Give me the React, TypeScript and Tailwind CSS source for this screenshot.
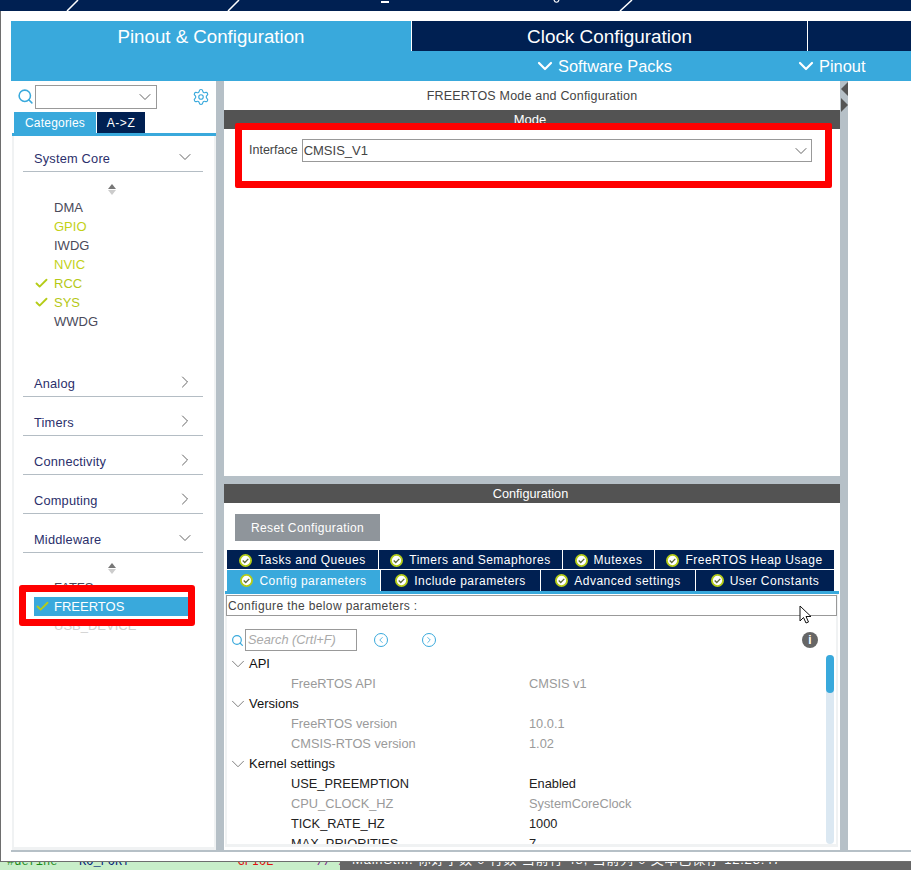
import { Search, Settings, ChevronDown, ChevronRight, Check, ChevronLeft } from "lucide-react";

const font = "font-['Liberation_Sans',Arial,sans-serif]";

const Category = ({ name, open }: { name: string; open?: boolean }) => (
    <div className="flex flex-row items-center justify-between h-[24px] ml-[9px] mr-[11px] border-b border-[#b4bdc4] pl-[11px] pr-[8px] text-[#2b2f6b] text-[12.8px] tracking-[0.2px]">
        <span className="-mt-[2px]">{name}</span>
        {open ? <ChevronDown size={20} strokeWidth={1.1} className="text-[#555] -mt-[6px]" /> : <ChevronRight size={20} strokeWidth={1.1} className="text-[#555] -mt-[6px]" />}
    </div>
);

const Sorter = () => (
    <div className="flex flex-col items-center gap-[1px] h-[14px] w-[10px]">
        <div className="w-0 h-0 border-x-[4px] border-x-transparent border-b-[5px] border-b-[#777]"></div>
        <div className="w-0 h-0 border-x-[4px] border-x-transparent border-t-[5px] border-t-[#ccc]"></div>
    </div>
);

const Ip = ({ name, color, checked }: { name: string; color: string; checked?: boolean }) => (
    <div className={`flex flex-row items-center shrink-0 h-[19px] pl-[20px] text-[13px] ${color}`}>
        <div className="w-[20px]">{checked && <Check size={15} strokeWidth={3} className="text-[#b5cc18]" />}</div>
        {name}
    </div>
);

const TabCheck = () => (
    <svg width="13" height="13" viewBox="0 0 14 14" className="shrink-0">
        <circle cx="7" cy="7" r="6" fill="#ffffff" stroke="#b5cc18" strokeWidth="2" />
        <path d="M4 7l2.2 2.2L10 5.2" fill="none" stroke="#5f6b3a" strokeWidth="1.4" />
    </svg>
);

const Tab = ({ name, w, active, pad }: { name: string; w: string; active?: boolean; pad?: string }) => (
    <div className={`flex flex-row items-center justify-center gap-[6px] h-full text-white text-[12px] tracking-[0.5px] ${w} ${pad ?? ""} ${active ? "bg-[#39a9dc]" : "bg-[#002052]"}`}>
        <TabCheck />
        {name}
    </div>
);

const Group = ({ name }: { name: string }) => (
    <div className="flex flex-row items-center shrink-0 h-[20px] text-[13px] text-[#111]">
        <ChevronDown size={22} strokeWidth={0.9} className="text-[#666]" />
        {name}
    </div>
);

const Param = ({ name, value, on }: { name: string; value: string; on?: boolean }) => (
    <div className={`flex flex-row items-center shrink-0 h-[20px] pl-[64px] text-[12.8px] ${on ? "text-[#222]" : "text-[#9a9a9a]"}`}>
        <span className="w-[238px]">{name}</span>
        {value}
    </div>
);

const App = () => {
    return (
        <div className={`relative w-[911px] h-[870px] overflow-hidden bg-white ${font}`}>
            {/* window title strip, only the bottom of it is visible */}
            <div className="h-[11px] bg-[#002052]">
                <svg width="911" height="11" className="block">
                    <path d="M78 0L67 11M239 0L228 11M632 0L620 11" stroke="#fff" strokeWidth="1.5" />
                    <rect x="381" y="1" width="8" height="2" fill="#fff" />
                    <path d="M554 0c1 3 4 3 5 0" stroke="#fff" strokeWidth="1.2" fill="none" />
                </svg>
            </div>

            <div className="h-[851px] border-l border-b border-[#6e6e6e] pl-[10px] pt-[10px] flex flex-col">
                {/* header */}
                <div className="h-[60px] flex flex-row bg-[#39a9dc] text-white shrink-0">
                    <div className="w-[400px] h-[30px] flex items-center justify-center text-[18.7px] pt-[3px]">Pinout &amp; Configuration</div>
                    <div className="flex-1 flex flex-col">
                        <div className="h-[30px] flex flex-row bg-[#002052] border-l border-white">
                            <div className="w-[396px] flex items-center justify-center text-[18.9px] pt-[3px] border-r border-white">Clock Configuration</div>
                        </div>
                        <div className="h-[30px] flex flex-row items-center text-[16.4px]">
                            <div className="flex flex-row items-center gap-[1px] ml-[122px] w-[261px]">
                                <ChevronDown size={24} strokeWidth={2.2} />
                                Software Packs
                            </div>
                            <div className="flex flex-row items-center gap-[1px]">
                                <ChevronDown size={24} strokeWidth={2.2} />
                                Pinout
                            </div>
                        </div>
                    </div>
                </div>

                <div className="flex flex-row h-[769px]">
                    {/* categories */}
                    <div className="w-[205px] flex flex-col bg-white">
                        <div className="h-[31px] flex flex-row items-center pl-[6px] pr-[6px] relative">
                            <Search size={17} strokeWidth={2.2} className="text-[#39a9dc] mr-[1px]" />
                            <div className="w-[122px] h-[24px] border border-[#999] flex items-center justify-end pr-[1px]">
                                <ChevronDown size={20} strokeWidth={1.1} className="text-[#555]" />
                            </div>
                            <Settings size={18} strokeWidth={1.5} className="text-[#39a9dc] ml-auto" />
                        </div>
                        <div className="flex flex-row h-[21px] pl-[3px] text-[12px] text-white gap-[1px]">
                            <div className="w-[82px] flex items-center justify-center bg-[#39a9dc] tracking-[0.2px]">Categories</div>
                            <div className="w-[48px] flex items-center justify-center bg-[#002052] tracking-[0.6px]">A-&gt;Z</div>
                        </div>
                        <div className="h-[3px] ml-[1px] bg-[#39a9dc]"></div>
                        <div className="flex-1 border-x-[2px] border-b-[3px] border-[#f0f2f3] ml-[1px] pt-[12px] flex flex-col min-h-0">
                            <Category name="System Core" open />
                            <div className="flex justify-center pt-[12px] pr-[4px] h-[26px] shrink-0"><Sorter /></div>
                            <div className="flex flex-col">
                                <Ip name="DMA" color="text-[#4a4a5a]" />
                                <Ip name="GPIO" color="text-[#c3d117]" />
                                <Ip name="IWDG" color="text-[#4a4a5a]" />
                                <Ip name="NVIC" color="text-[#c3d117]" />
                                <Ip name="RCC" color="text-[#b5c816]" checked />
                                <Ip name="SYS" color="text-[#b5c816]" checked />
                                <Ip name="WWDG" color="text-[#4a4a5a]" />
                            </div>
                            <div className="h-[42px] shrink-0"></div>
                            <div className="flex flex-col gap-[15px]">
                                <Category name="Analog" />
                                <Category name="Timers" />
                                <Category name="Connectivity" />
                                <Category name="Computing" />
                                <Category name="Middleware" open />
                            </div>
                            <div className="flex justify-center pt-[10px] pr-[4px] h-[25px] shrink-0"><Sorter /></div>
                            <Ip name="FATFS" color="text-[#4a4a5a]" />
                            <div className="flex flex-row items-center shrink-0 h-[19px] ml-[20px] w-[155px] bg-[#39a9dc] text-white text-[13px]">
                                <div className="w-[20px] pl-[1px]"><Check size={15} strokeWidth={3} className="text-[#b5cc18]" /></div>
                                FREERTOS
                            </div>
                            <Ip name="USB_DEVICE" color="text-[#d0d0d0]" />
                        </div>
                    </div>
                    <div className="w-[8px] bg-[#b6c0c7]"></div>

                    {/* mode and configuration */}
                    <div className="w-[616px] flex flex-col">
                        <div className="h-[29px] flex items-center justify-center text-[12.5px] text-[#444] tracking-[0.2px] pt-[2px]">FREERTOS Mode and Configuration</div>
                        <div className="h-[19px] bg-[#535353] text-white text-[13px] flex items-center justify-center pr-[4px]">Mode</div>
                        <div className="h-[347px] pl-[25px] pt-[10px]">
                            <div className="flex flex-row items-center gap-[4px] text-[12.5px] text-[#444]">
                                Interface
                                <div className="w-[510px] h-[23px] border border-[#999] flex flex-row items-center justify-between pl-[1px] text-[13px]">
                                    CMSIS_V1
                                    <ChevronDown size={20} strokeWidth={1.1} className="text-[#555]" />
                                </div>
                            </div>
                        </div>
                        <div className="h-[8px] bg-[#b6c0c7]"></div>
                        <div className="h-[19px] bg-[#535353] text-white text-[12.7px] flex items-center justify-center pr-[3px] pt-[2px]">Configuration</div>
                        <div className="h-[344px] flex flex-col">
                            <div className="mt-[11px] ml-[11px] w-[145px] h-[27px] bg-[#8f959b] text-white text-[12px] tracking-[0.37px] flex items-center justify-center">Reset Configuration</div>
                            <div className="mt-[9px] ml-[3px] w-[607px] h-[19px] flex flex-row gap-[1px]">
                                <Tab name="Tasks and Queues" w="w-[151px]" pad="pt-[1px]" />
                                <Tab name="Timers and Semaphores" w="w-[183px]" pad="pt-[1px]" />
                                <Tab name="Mutexes" w="w-[91px]" pad="pt-[1px]" />
                                <Tab name="FreeRTOS Heap Usage" w="flex-1" pad="pt-[1px]" />
                            </div>
                            <div className="mt-[1px] ml-[3px] w-[607px] h-[21px] flex flex-row gap-[1px]">
                                <Tab name="Config parameters" w="w-[153px]" active />
                                <Tab name="Include parameters" w="w-[159px]" />
                                <Tab name="Advanced settings" w="w-[154px]" />
                                <Tab name="User Constants" w="flex-1" />
                            </div>
                            <div className="h-[3px] ml-[1px] w-[614px] bg-[#39a9dc]"></div>
                            <div className="flex-1 ml-[1px] w-[613px] border-x-[2px] border-b-[3px] border-[#f0f2f3] flex flex-col min-h-0">
                                <div className="mt-[1px] -ml-[1px] w-[611px] h-[21px] border border-[#999] text-[12px] text-[#444] tracking-[0.38px] flex items-center pl-[1px] shrink-0">Configure the below parameters :</div>
                                <div className="h-[48px] -mb-[10px] flex flex-row items-center pl-[4px] shrink-0">
                                    <Search size={13} strokeWidth={2.2} className="text-[#39a9dc] mr-[1px]" />
                                    <div className="w-[112px] h-[22px] border border-[#999] flex items-center pl-[2px] text-[12.8px] italic text-[#aaa]">Search (Crtl+F)</div>
                                    <div className="ml-[17px] w-[14px] h-[14px] rounded-full border border-[#39a9dc] flex items-center justify-center">
                                        <ChevronLeft size={10} strokeWidth={2} className="text-[#39a9dc]" />
                                    </div>
                                    <div className="ml-[34px] w-[14px] h-[14px] rounded-full border border-[#39a9dc] flex items-center justify-center">
                                        <ChevronRight size={10} strokeWidth={2} className="text-[#39a9dc]" />
                                    </div>
                                    <div className="ml-[366px] w-[16px] h-[16px] rounded-full bg-[#666] text-white text-[12px] font-bold flex items-center justify-center">i</div>
                                </div>
                                <div className="flex-1 flex flex-row min-h-0 overflow-hidden">
                                    <div className="w-[599px] flex flex-col overflow-hidden">
                                        <Group name="API" />
                                        <Param name="FreeRTOS API" value="CMSIS v1" />
                                        <Group name="Versions" />
                                        <Param name="FreeRTOS version" value="10.0.1" />
                                        <Param name="CMSIS-RTOS version" value="1.02" />
                                        <Group name="Kernel settings" />
                                        <Param name="USE_PREEMPTION" value="Enabled" on />
                                        <Param name="CPU_CLOCK_HZ" value="SystemCoreClock" />
                                        <Param name="TICK_RATE_HZ" value="1000" on />
                                        <Param name="MAX_PRIORITIES" value="7" on />
                                    </div>
                                    <div className="w-[8px] h-[189px] mt-[1px] rounded-[4px] bg-[#dbe8f2]">
                                        <div className="h-[38px] rounded-[4px] bg-[#39a9dc]"></div>
                                    </div>
                                </div>
                            </div>
                        </div>
                    </div>
                    <div className="w-[8px] bg-[#b6c0c7]"></div>
                </div>
                <div className="h-[2px] bg-[#b6c0c7]"></div>
            </div>

            {/* editor behind the window */}
            <div className="h-[8px] flex flex-row overflow-hidden text-[12px]">
                <div className="w-[340px] bg-[#c8eec9] font-['Liberation_Mono',monospace]">
                    <div className="-mt-[9px] pl-[7px] whitespace-pre"><span className="text-[#1a8a1a]">#define</span>   <span className="text-[#00207a]">KO_PORT</span>               <span className="text-[#e01010]">GPIOE</span>      <span className="text-[#7a1a8a]">// /</span></div>
                </div>
                <div className="flex-1 bg-[#666666] text-white">
                    <div className="-mt-[12px] pl-[12px] whitespace-pre text-[13px] tracking-[0.8px] font-['Liberation_Sans','Noto_Sans_CJK_SC',sans-serif]">MainStm. 你好字数 0 行数 当前行 48, 当前列 0 文本已保存 12:23:47</div>
                </div>
            </div>

            {/* annotations drawn on top of the screenshot */}
            <div className="absolute left-[235px] top-[123px] w-[597px] h-[65px] border-[7px] border-[#ff0000] rounded-[2px]"></div>
            <div className="absolute left-[19px] top-[585px] w-[176px] h-[41px] border-[7px] border-[#ff0000] rounded-[3px]"></div>
            <svg width="14" height="20" viewBox="0 0 14 20" className="absolute left-[799px] top-[605px]">
                <path d="M1 1v15l3.5-3.5 2.5 5.5 2.5-1-2.5-5.5h5z" fill="#fff" stroke="#111" strokeWidth="1" />
            </svg>
            {/* splitter arrows */}
            <div className="absolute left-[841px] top-[82px] w-0 h-0 border-y-[7px] border-y-transparent border-r-[7px] border-r-[#555]"></div>
            <div className="absolute left-[841px] top-[98px] w-0 h-0 border-y-[7px] border-y-transparent border-l-[7px] border-l-[#555]"></div>
        </div>
    );
};

export default App;
